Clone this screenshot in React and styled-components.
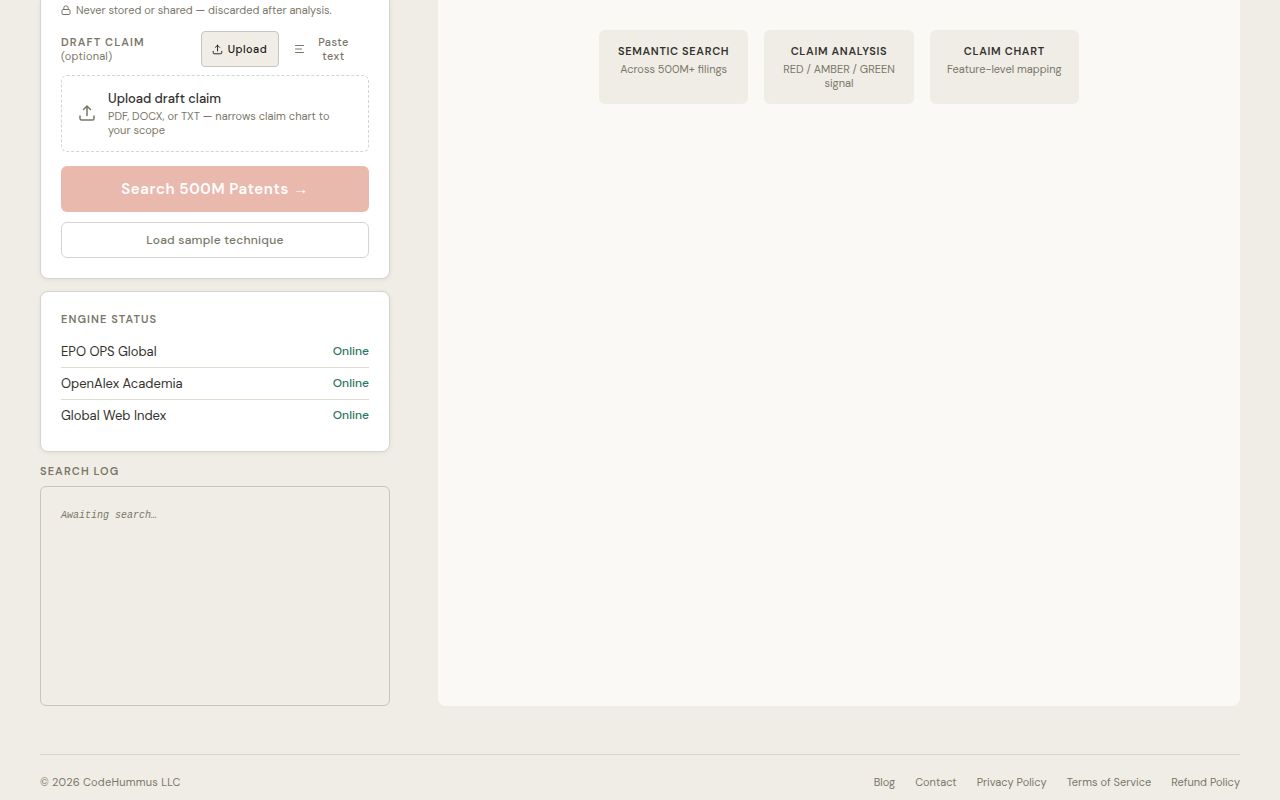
import React, { useState } from "react";
import styled, { createGlobalStyle, css } from "styled-components";

const c = {
  page: "#f0ede6",
  panel: "#faf9f5",
  ink: "#33322e",
  muted: "#7a7768",
  line: "#d4d4d2",
  lineWarm: "#c8c5be",
  rule: "#dfddd0",
  green: "#2a7560",
  coral: "#eab9ae",
};

const GlobalStyle = createGlobalStyle`
  *, *::before, *::after { box-sizing: border-box; }
  body {
    margin: 0;
    background: ${c.page};
    color: ${c.ink};
    font-family: "DM Sans", Inter, "Liberation Sans", sans-serif;
    font-size: 11px;
    line-height: 14px;
  }
  button { font-family: inherit; cursor: pointer; }
`;

const Page = styled.div`
  max-width: 1280px;
  margin: 0 auto;
  padding: 0 40px;
`;

const Columns = styled.div`
  display: grid;
  grid-template-columns: 350px minmax(0, 1fr);
  gap: 48px;
`;

const Sidebar = styled.aside`
  display: flex;
  flex-direction: column;
  gap: 12px;
`;

const Card = styled.section`
  background: #fff;
  border: 1px solid ${c.line};
  border-radius: 8px;
  padding: 20px;
  box-shadow: 0 1px 4px rgba(60, 55, 40, 0.08);
  ${(p) =>
    p.$continued &&
    css`
      border-top: 0;
      border-radius: 0 0 8px 8px;
      padding-top: 3px;
    `}
`;

const PrivacyNote = styled.p`
  display: flex;
  align-items: center;
  gap: 5px;
  margin: 0 0 14px;
  color: ${c.muted};
`;

const FieldHead = styled.div`
  display: flex;
  align-items: center;
  justify-content: space-between;
  margin-bottom: 8px;
`;

const Caption = styled.h2`
  margin: 0;
  font-size: 11px;
  line-height: 14px;
  font-weight: 600;
  letter-spacing: 0.1em;
  text-transform: uppercase;
  color: ${c.muted};
`;

const Optional = styled.span`
  display: block;
  font-weight: 400;
  letter-spacing: 0.02em;
  text-transform: none;
`;

const Tabs = styled.div`
  display: flex;
  gap: 4px;
  width: 168px;
`;

const Tab = styled.button`
  flex: ${(p) => (p.$wide ? "1" : "0 0 78px")};
  display: flex;
  align-items: center;
  gap: 4px;
  min-height: 36px;
  padding: 0 10px;
  border: 1px solid ${(p) => (p.$active ? c.lineWarm : "transparent")};
  border-radius: 4px;
  background: ${(p) => (p.$active ? c.page : "transparent")};
  color: ${(p) => (p.$active ? "#1a1a18" : c.muted)};
  font-size: 11px;
  line-height: 14px;
  font-weight: 500;
  letter-spacing: 0.04em;
  svg { flex: none; }
  span { flex: 1; }
`;

const DropZone = styled.label`
  display: flex;
  align-items: center;
  gap: 12px;
  min-height: 77px;
  padding: 0 16px 1px;
  border: 1px dashed ${c.line};
  border-radius: 6px;
  cursor: pointer;
  svg { flex: none; color: ${c.muted}; }
`;

const HiddenFile = styled.input`
  position: absolute;
  width: 1px;
  height: 1px;
  opacity: 0;
`;

const DropText = styled.span`
  display: flex;
  flex-direction: column;
  gap: 1px;
  color: ${c.muted};
  strong {
    color: ${c.ink};
    font-size: 13px;
    line-height: 18px;
    font-weight: 500;
  }
`;

const SearchButton = styled.button`
  display: block;
  width: 100%;
  height: 46px;
  margin-top: 14px;
  border: 0;
  border-radius: 6px;
  background: ${c.coral};
  color: #fff;
  font-size: 15px;
  font-weight: 600;
  letter-spacing: 0.04em;
`;

const Arrow = styled.span`
  font-family: "Liberation Sans", sans-serif;
`;

const SampleButton = styled.button`
  display: block;
  width: 100%;
  height: 36px;
  margin-top: 10px;
  border: 1px solid ${c.line};
  border-radius: 6px;
  background: transparent;
  color: ${c.muted};
  font-size: 12px;
  font-weight: 500;
  letter-spacing: 0.02em;
`;

const StatusList = styled.ul`
  list-style: none;
  margin: 10px 0 0;
  padding: 0;
`;

const StatusRow = styled.li`
  display: flex;
  align-items: center;
  justify-content: space-between;
  padding: 6px 0;
  font-size: 13px;
  line-height: 19px;
  & + & { border-top: 1px solid ${c.rule}; }
`;

const Online = styled.span`
  color: ${c.green};
  font-size: 12px;
  font-weight: 500;
`;

const LogSection = styled.section`
  display: flex;
  flex-direction: column;
  gap: 8px;
`;

const LogBox = styled.div`
  height: 220px;
  padding: 20px;
  border: 1px solid ${c.lineWarm};
  border-radius: 6px;
  color: ${c.muted};
  font: italic 10px/18px "Liberation Mono", monospace;
`;

const Results = styled.main`
  padding: 30px 40px;
  border-radius: 0 0 8px 8px;
  background: ${c.panel};
`;

const Features = styled.div`
  display: grid;
  grid-template-columns: repeat(3, 1fr);
  gap: 16px;
  max-width: 480px;
  margin: 0 auto;
`;

const Feature = styled.article`
  padding: 14px;
  border-radius: 6px;
  background: ${c.page};
  color: ${c.muted};
  text-align: center;
`;

const FeatureTitle = styled.h3`
  margin: 0 0 4px;
  color: ${c.ink};
  font-size: 11px;
  line-height: 14px;
  font-weight: 600;
  letter-spacing: 0.06em;
  text-transform: uppercase;
  white-space: nowrap;
`;

const FeatureText = styled.p`
  margin: 0;
`;

const Footer = styled.footer`
  display: flex;
  align-items: center;
  justify-content: space-between;
  margin-top: 48px;
  padding: 20px 0 10px;
  border-top: 1px solid #d8d5ce;
  color: ${c.muted};
`;

const Copyright = styled.span`
  letter-spacing: 0.02em;
`;

const FooterNav = styled.nav`
  display: flex;
  gap: 20px;
`;

const FooterLink = styled.a`
  color: inherit;
  text-decoration: none;
`;

const UploadIcon = ({ size }) => (
  <svg width={size} height={size} viewBox="0 0 18 18" fill="none" stroke="currentColor" strokeWidth="1.5" strokeLinecap="round" strokeLinejoin="round" aria-hidden="true">
    <path d="M9 11.5V2M5.5 5.5 9 2l3.5 3.5M2 12v2.5A1.5 1.5 0 0 0 3.5 16h11a1.5 1.5 0 0 0 1.5-1.5V12" />
  </svg>
);

const LinesIcon = () => (
  <svg width="11" height="11" viewBox="0 0 11 11" fill="none" stroke="currentColor" strokeLinecap="round" aria-hidden="true">
    <path d="M1.5 1.5h8M1.5 5h6M1.5 8.5h8" />
  </svg>
);

const LockIcon = () => (
  <svg width="10" height="10" viewBox="0 0 10 10" fill="none" stroke="currentColor" aria-hidden="true">
    <rect x="1" y="4.5" width="8" height="5" rx="1" />
    <path d="M2.8 4.5V3a2.2 2.2 0 0 1 4.4 0v1.5" />
  </svg>
);

const engines = ["EPO OPS Global", "OpenAlex Academia", "Global Web Index"];

const features = [
  ["Semantic search", "Across 500M+ filings"],
  ["Claim analysis", "RED / AMBER / GREEN signal"],
  ["Claim chart", "Feature-level mapping"],
];

const links = ["Blog", "Contact", "Privacy Policy", "Terms of Service", "Refund Policy"];

export default function App() {
  const [mode, setMode] = useState("upload");
  return (
    <>
      <GlobalStyle />
      <Page>
        <Columns>
          <Sidebar>
            <Card $continued>
              <PrivacyNote>
                <LockIcon />
                Never stored or shared — discarded after analysis.
              </PrivacyNote>
              <FieldHead>
                <Caption as="label" htmlFor="draft-claim">
                  Draft claim
                  <Optional>(optional)</Optional>
                </Caption>
                <Tabs>
                  <Tab type="button" $active={mode === "upload"} onClick={() => setMode("upload")}>
                    <UploadIcon size={11} />
                    <span>Upload</span>
                  </Tab>
                  <Tab type="button" $wide $active={mode === "paste"} onClick={() => setMode("paste")}>
                    <LinesIcon />
                    <span>Paste text</span>
                  </Tab>
                </Tabs>
              </FieldHead>
              <DropZone>
                <HiddenFile id="draft-claim" type="file" accept=".pdf,.docx,.txt" />
                <UploadIcon size={18} />
                <DropText>
                  <strong>Upload draft claim</strong>
                  <span>PDF, DOCX, or TXT — narrows claim chart to your scope</span>
                </DropText>
              </DropZone>
              <SearchButton type="button">
                Search 500M Patents <Arrow>→</Arrow>
              </SearchButton>
              <SampleButton type="button">Load sample technique</SampleButton>
            </Card>

            <Card>
              <Caption>Engine status</Caption>
              <StatusList>
                {engines.map((name) => (
                  <StatusRow key={name}>
                    {name}
                    <Online>Online</Online>
                  </StatusRow>
                ))}
              </StatusList>
            </Card>

            <LogSection>
              <Caption>Search log</Caption>
              <LogBox>Awaiting search…</LogBox>
            </LogSection>
          </Sidebar>

          <Results>
            <Features>
              {features.map(([title, text]) => (
                <Feature key={title}>
                  <FeatureTitle>{title}</FeatureTitle>
                  <FeatureText>{text}</FeatureText>
                </Feature>
              ))}
            </Features>
          </Results>
        </Columns>

        <Footer>
          <Copyright>© 2026 CodeHummus LLC</Copyright>
          <FooterNav>
            {links.map((label) => (
              <FooterLink key={label} href="#">{label}</FooterLink>
            ))}
          </FooterNav>
        </Footer>
      </Page>
    </>
  );
}
